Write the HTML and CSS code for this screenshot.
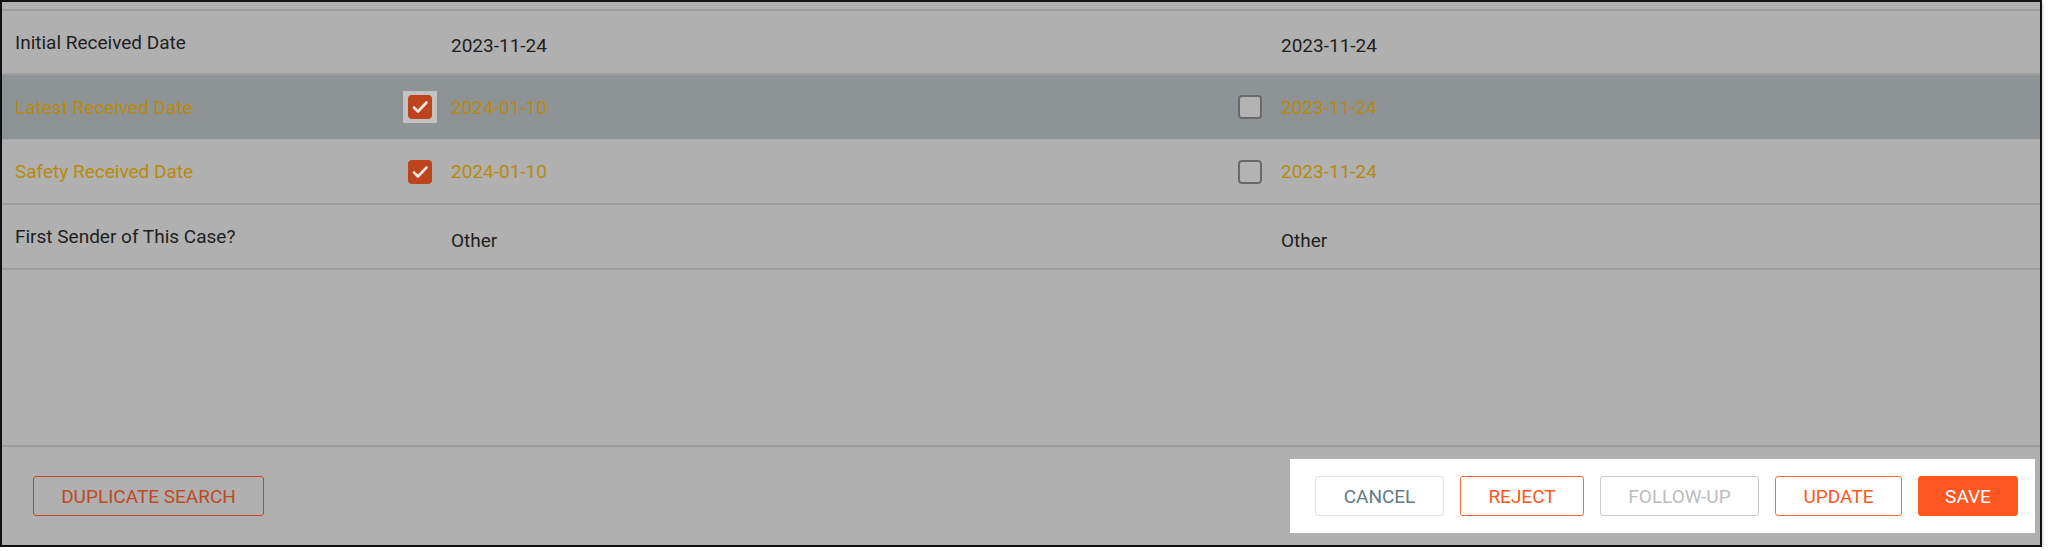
FILE: index.html
```html
<!DOCTYPE html>
<html lang="en">
<head>
<meta charset="utf-8">
<title>Case Compare</title>
<link rel="stylesheet" href="styles.css">
</head>
<body>
<div class="frame">
  <div class="stub"></div>
  <div class="row">
    <div class="label">Initial Received Date</div>
    <div class="cell"><span class="value plain">2023-11-24</span></div>
    <div class="cell"><span class="value plain">2023-11-24</span></div>
  </div>
  <div class="row row-hl">
    <div class="label gold">Latest Received Date</div>
    <div class="cell">
      <span class="focus"><span class="cb cb-on"><svg viewBox="0 0 24 24" width="24" height="24"><polyline points="6,12.5 10,16.5 18.5,7.5" fill="none" stroke="#ece4e0" stroke-width="2.6" stroke-linecap="round" stroke-linejoin="round"/></svg></span></span>
      <span class="value gold">2024-01-10</span>
    </div>
    <div class="cell">
      <span class="cb"></span>
      <span class="value gold">2023-11-24</span>
    </div>
  </div>
  <div class="row">
    <div class="label gold">Safety Received Date</div>
    <div class="cell">
      <span class="cb cb-on"><svg viewBox="0 0 24 24" width="24" height="24"><polyline points="6,12.5 10,16.5 18.5,7.5" fill="none" stroke="#ece4e0" stroke-width="2.6" stroke-linecap="round" stroke-linejoin="round"/></svg></span>
      <span class="value gold">2024-01-10</span>
    </div>
    <div class="cell">
      <span class="cb"></span>
      <span class="value gold">2023-11-24</span>
    </div>
  </div>
  <div class="row">
    <div class="label">First Sender of This Case?</div>
    <div class="cell"><span class="value plain">Other</span></div>
    <div class="cell"><span class="value plain">Other</span></div>
  </div>
  <div class="spacer"></div>
  <div class="footer">
    <button class="btn btn-dup">DUPLICATE SEARCH</button>
    <div class="panel">
      <button class="btn btn-cancel">CANCEL</button>
      <button class="btn btn-outline btn-reject">REJECT</button>
      <button class="btn btn-disabled">FOLLOW-UP</button>
      <button class="btn btn-outline btn-update">UPDATE</button>
      <button class="btn btn-save">SAVE</button>
    </div>
  </div>
</div>
</body>
</html>
```

FILE: styles.css
```css
* { box-sizing: border-box; }
html, body { margin: 0; padding: 0; background: #ffffff; }
body {
  font-family: Roboto, "Liberation Sans", Arial, sans-serif;
  font-size: 19px;
  color: #1e1e1e;
}
.frame {
  width: 2042px;
  height: 547px;
  border: 2px solid #111111;
  background: #b0b0b0;
  box-shadow: 0 2px 4px rgba(0,0,0,0.28);
  display: flex;
  flex-direction: column;
}
.stub {
  height: 9px;
  flex: none;
  border-bottom: 2px solid #9d9d9d;
}
.row {
  flex: none;
  height: 65px;
  display: grid;
  grid-template-columns: 398px 830px 1fr;
  align-items: center;
  border-bottom: 1px solid #a2a2a2;
}
.row-hl {
  background: #8e9396;
  border-bottom-color: #a5a8aa;
}
.row:nth-child(2) { border-bottom: 2px solid #9f9f9f; height: 64px; }
.row:nth-child(4), .row:nth-child(5) { border-bottom: 2px solid #9d9d9d; }
.label {
  padding-left: 13px;
  white-space: nowrap;
}
.gold { color: #b88a0c; }
.cell {
  display: flex;
  align-items: center;
  padding-left: 8px;
  height: 100%;
}
.value { white-space: nowrap; }
.value.plain {
  margin-left: 43px;
  margin-top: 7px;
}
.cb {
  width: 24px;
  height: 24px;
  flex: none;
  border: 2px solid #6a6a6a;
  border-radius: 4px;
  background: #b3b3b3;
  margin-right: 19px;
  display: flex;
  align-items: center;
  justify-content: center;
}
.cb svg { display: block; flex: none; }
.cb-on {
  border: none;
  background: #be441e;
}
.focus {
  display: flex;
  align-items: center;
  justify-content: center;
  width: 34px;
  height: 32px;
  margin-left: -5px;
  margin-right: 14px;
  background: #c3c3c3;
  flex: none;
}
.focus .cb { margin-right: 0; }
.spacer { flex: 1; }
.footer {
  flex: none;
  height: 100px;
  border-top: 2px solid #9b9b9b;
  display: flex;
  align-items: center;
  justify-content: space-between;
  padding-left: 31px;
  padding-right: 5px;
}
.panel {
  background: #ffffff;
  display: flex;
  gap: 16px;
  padding: 17px 17px 17px 25px;
}
.btn {
  font-family: Roboto, "Liberation Sans", Arial, sans-serif;
  font-size: 19px;
  height: 40px;
  padding: 0;
  white-space: nowrap;
  border-radius: 3px;
  background: transparent;
  border: 1.5px solid transparent;
  line-height: 1;
  cursor: pointer;
  display: flex;
  align-items: center;
  justify-content: center;
  flex: none;
}
.btn-dup {
  color: #bd4a24;
  border-color: #bd4a24;
  width: 231px;
}
.btn-cancel {
  width: 129px;
  color: #5f7b89;
  border-color: #e2e2e2;
}
.btn-outline {
  color: #ff5722;
  border-color: #ff6a3c;
}
.btn-reject { width: 124px; }
.btn-update { width: 127px; }
.btn-disabled {
  width: 159px;
  color: #bdbdbd;
  border-color: #c9c9c9;
}
.btn-save {
  width: 100px;
  color: #ffffff;
  background: #ff5722;
  border-color: #ff5722;
}
```
